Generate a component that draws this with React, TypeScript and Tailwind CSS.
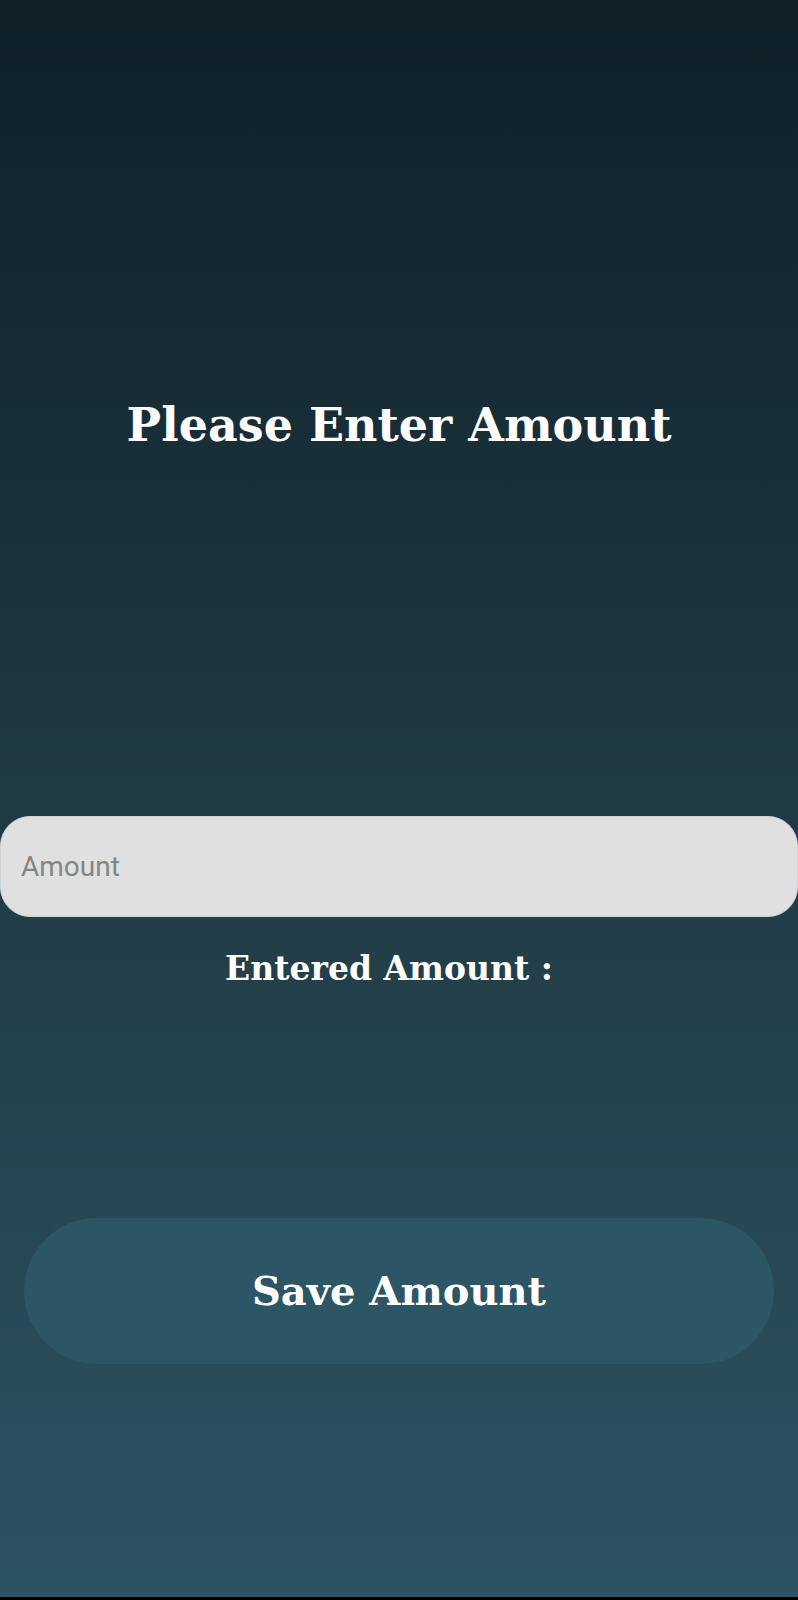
import { useState } from "react";

export default function App() {
  const [amount, setAmount] = useState("");
  const [saved, setSaved] = useState("");

  return (
    <div className="h-[1600px] w-full flex flex-col items-center border-b-[3px] border-black bg-gradient-to-b from-[#0f2027] via-[#203a43] to-[#2c5364] font-['DejaVu_Serif',serif] text-white">
      <h1 className="mt-[395px] h-[60px] text-[46px] leading-[60px] font-bold">
        Please Enter Amount
      </h1>

      <input
        value={amount}
        onChange={(e) => setAmount(e.target.value)}
        placeholder="Amount"
        className="mt-[361px] h-[101px] w-full rounded-[30px] border border-[#cfd4d8] bg-[#e0e0e0] px-[20px] font-['Roboto',sans-serif] text-[28px] text-[#333] placeholder:text-[#858585] outline-none"
      />

      {/* value is shown after the colon, so the empty label sits a bit left */}
      <p className="mt-[30px] h-[44px] pr-[20px] text-[33px] leading-[44px] font-bold">
        Entered Amount : {saved}
      </p>

      <button
        onClick={() => setSaved(amount)}
        className="mt-[227px] h-[146px] w-[750px] rounded-full bg-[#2c5566] text-[40px] font-bold text-white"
      >
        Save Amount
      </button>
    </div>
  );
}
